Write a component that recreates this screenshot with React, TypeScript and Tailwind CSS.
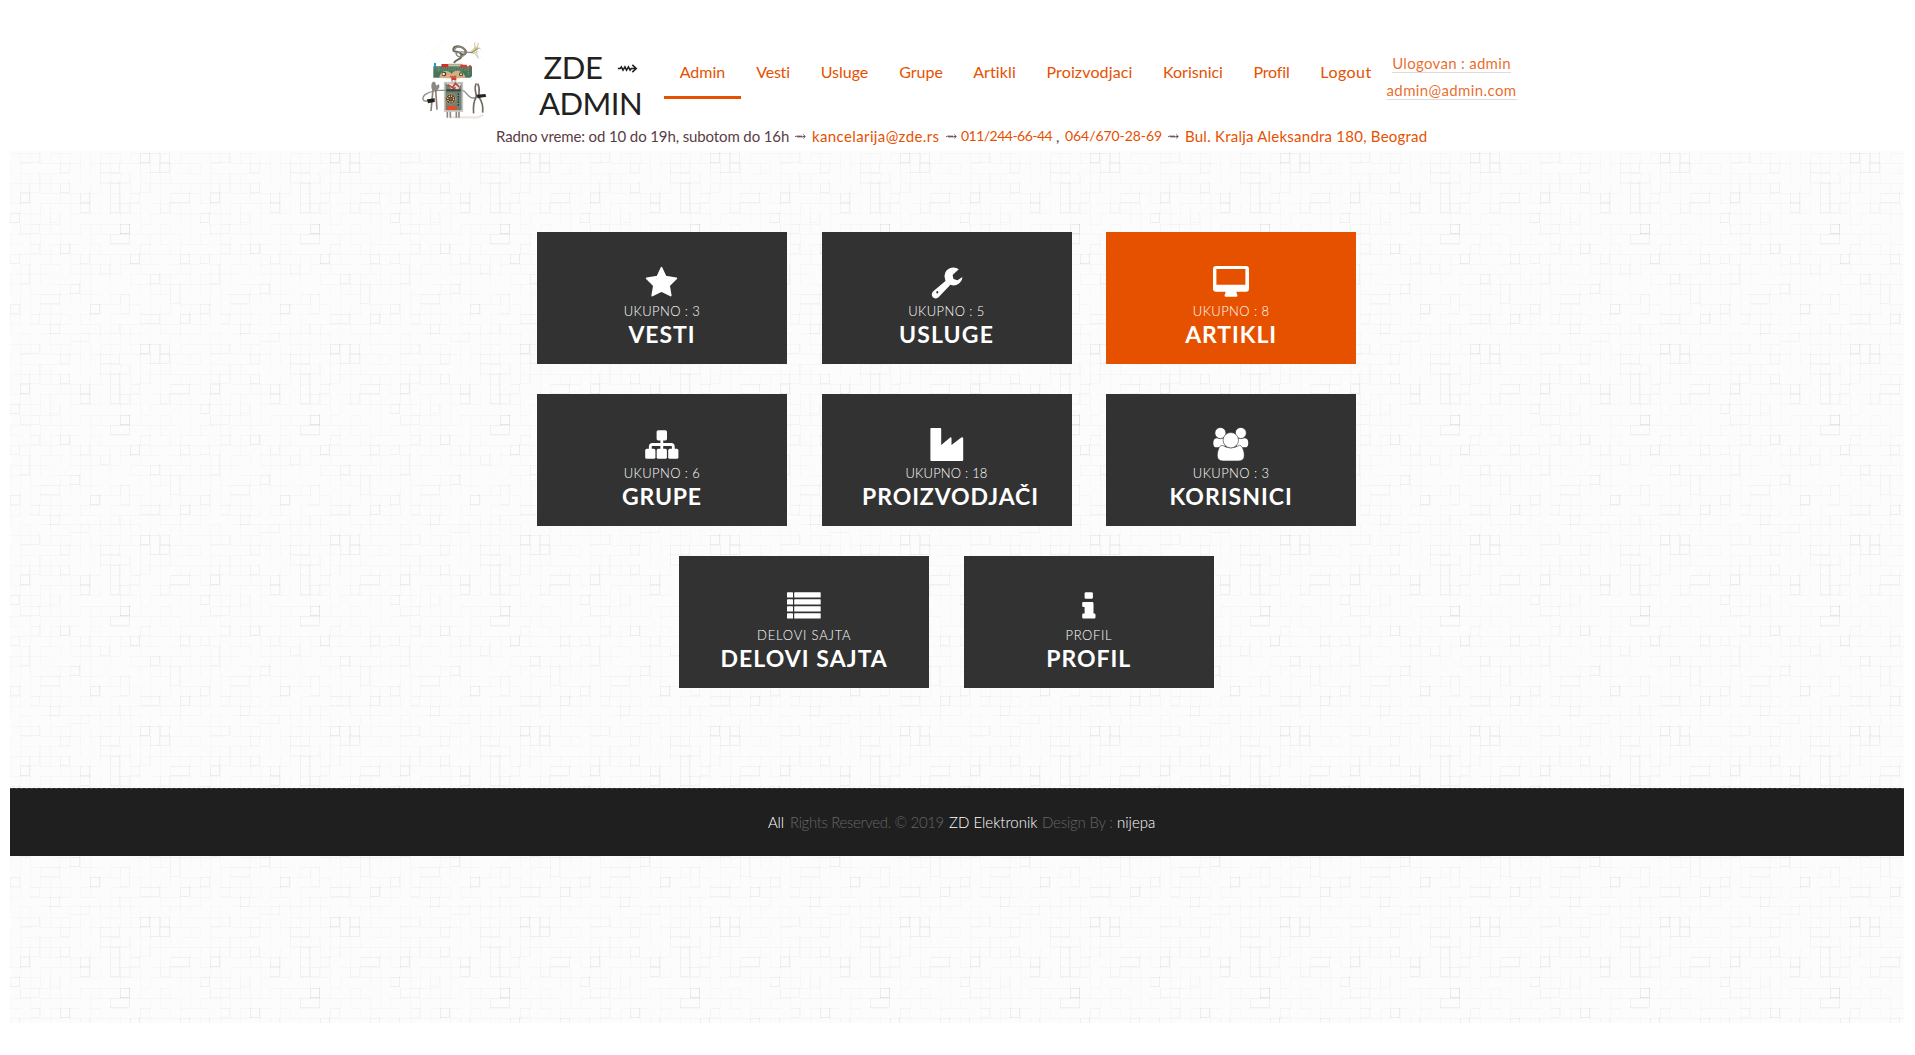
import React from "react";

const TILE_W = 190;
const TILE_H = 191;
const ROWS = [2, 12, 22, 32, 42, 52, 62, 73, 83, 93, 103, 113, 123, 133, 143, 153, 163, 173, 182];

/* Faint raised squares: [x, y, width, height, opacity] */
const SQUARES: number[][] = [
  [10, 2, 20, 10, 0.1], [130, 2, 10, 10, 0.2], [140, 2, 10, 20, 0.1], [150, 2, 10, 10, 0.13],
  [50, 12, 10, 10, 0.08], [90, 12, 20, 10, 0.1], [150, 12, 10, 10, 0.14], [130, 12, 20, 10, 0.05],
  [20, 22, 10, 20, 0.07], [90, 22, 30, 10, 0.06], [50, 32, 10, 10, 0.13], [10, 32, 10, 10, 0.1],
  [10, 42, 10, 10, 0.18], [100, 32, 10, 30, 0.13], [70, 42, 10, 10, 0.15], [70, 52, 10, 10, 0.14],
  [130, 32, 10, 10, 0.06], [120, 42, 10, 10, 0.08], [160, 42, 20, 10, 0.14], [150, 52, 10, 10, 0.08],
  [0, 62, 10, 10, 0.15], [110, 52, 10, 10, 0.08], [40, 62, 10, 10, 0.07], [110, 73, 10, 10, 0.25],
  [10, 73, 20, 10, 0.09], [100, 83, 20, 10, 0.14], [50, 93, 10, 10, 0.19], [20, 93, 10, 10, 0.08],
  [130, 93, 10, 10, 0.06], [120, 103, 10, 10, 0.2], [0, 103, 10, 10, 0.12], [170, 103, 10, 10, 0.13],
  [70, 103, 10, 10, 0.09], [10, 113, 10, 20, 0.11], [90, 113, 10, 10, 0.09], [60, 133, 10, 10, 0.15],
  [140, 123, 10, 10, 0.14], [30, 143, 20, 10, 0.1], [110, 143, 10, 20, 0.09], [160, 133, 10, 20, 0.09],
  [80, 153, 10, 10, 0.17], [0, 153, 10, 10, 0.1], [130, 163, 20, 10, 0.12], [40, 173, 10, 10, 0.1],
  [100, 173, 10, 10, 0.08], [170, 163, 10, 10, 0.16], [60, 182, 20, 9, 0.08], [20, 163, 10, 10, 0.08],
];

function fineEdges() {
  let seed = 37;
  const next = () => {
    seed = (seed * 16807) % 2147483647;
    return seed / 2147483647;
  };
  let path = "";
  for (const y of ROWS) {
    for (let x = 0; x < TILE_W; x += 10) {
      if (next() < 0.62) path += `M${x + 0.5} ${y + 0.5}h10`;
      if (next() < 0.62) path += `M${x + 0.5} ${y + 0.5}v10`;
    }
  }
  return path;
}

const EDGES = fineEdges();

function Texture() {
  return (
    <svg className="absolute inset-0 h-full w-full" aria-hidden="true">
      <defs>
        <pattern id="squares" width={TILE_W} height={TILE_H} patternUnits="userSpaceOnUse">
          <rect width={TILE_W} height={TILE_H} fill="#fcfcfc" />
          <path d={EDGES} stroke="#000" strokeOpacity="0.02" fill="none" />
          {SQUARES.map(([x, y, w, h, o], i) => (
            <g key={i} fill="none" stroke="#000">
              <path d={`M${x + 0.5} ${y + h - 0.5}V${y + 0.5}H${x + w}`} strokeOpacity={o * 0.18} />
              <path d={`M${x} ${y + h - 0.5}h${w - 0.5}v${-h}`} strokeOpacity={o * 0.34} />
            </g>
          ))}
        </pattern>
      </defs>
      <rect width="100%" height="100%" fill="url(#squares)" />
    </svg>
  );
}

function Robot() {
  return (
    <svg viewBox="0 0 240 300" className="h-[100px] w-[80px] shrink-0" fill="none" aria-hidden="true">
      <path d="M25 85 95 25M150 30l60 65M30 160l35 55M175 30l30 40" stroke="#f6f6f6" strokeWidth="2" />
      <path d="M105 262h85l15-8" stroke="#f0e4e0" strokeWidth="7" />
      <path d="M117 99c5-14 26-9 22-24-3-14-22-6-24-14-2-16 21-16 35-2 8 10-2 19-11 12" stroke="#69685b" strokeWidth="6" />
      <path d="M119 60c4-15 31-12 31 5s-22 20-27 6c9-12 32-2 47-3l18-12" stroke="#8b887b" strokeWidth="4" />
      <path d="m165 67 17-16m-12 14 24-11m-21 9 16 19m-9-20-1-24m5 20 7-19" stroke="#c6a54f" strokeWidth="2" />
      <path d="m171 72 20-8m-10-10 9 33m-8-37 15 7" stroke="#80b795" strokeWidth="1.5" />
      <path d="M101 101h39l9 6H94z" fill="#b9aa8e" />
      <path d="M55 109h116v29l-5 5H55z" fill="#48745d" />
      <path d="M58 114h110M63 120h98M71 109v16M160 112v23" stroke="#7f9c74" strokeWidth="3" strokeDasharray="4 3" />
      <rect x="79" y="102" width="21" height="9" rx="2" fill="#d82b2b" />
      <rect x="136" y="104" width="20" height="8" rx="2" fill="#df3931" />
      <path d="M60 99v12" stroke="#189cd8" strokeWidth="6" />
      <path d="M165 106v11" stroke="#d63a38" strokeWidth="6" />
      <path d="M73 143c4-26 30-23 37-11 7-14 34-14 42 11-27 3-53 3-79 0z" fill="#d9ad80" />
      <circle cx="87" cy="132" r="7" fill="#333d38" />
      <circle cx="86" cy="132" r="4" fill="#f5f1da" />
      <circle cx="138" cy="133" r="6" fill="#34473f" />
      <circle cx="138" cy="133" r="3" fill="#f1e8cf" />
      <path d="M105 139q9 4 19-1" stroke="#a84e32" strokeWidth="3" />
      <rect x="109" y="142" width="15" height="8" fill="#d43a2e" />
      <path d="M111 150v15m10-15v15" stroke="#b6b6ad" strokeWidth="6" />
      <rect x="89" y="158" width="53" height="85" fill="#6f8275" stroke="#c5c7c4" strokeWidth="5" />
      <path d="m94 160 45 1-11 20-19-4z" fill="#e6dfd4" />
      <path d="m98 164 15 9 8-13 12 11M110 181l12-9" stroke="#bd403a" strokeWidth="5" />
      <path d="M94 181h43" stroke="#374c3f" strokeWidth="7" />
      <circle cx="107" cy="207" r="15" fill="#4d3d2e" stroke="#b49464" strokeWidth="3" />
      <circle cx="107" cy="207" r="9" stroke="#e4cf9a" strokeWidth="4" strokeDasharray="4 3" />
      <circle cx="107" cy="207" r="4" fill="#8d5c38" />
      <path d="M130 190v40" stroke="#2f3c35" strokeWidth="4" strokeDasharray="5 3" />
      <rect x="95" y="228" width="31" height="12" fill="#e34d28" />
      <path d="M97 245v18m9-18v18m18-18v18m8-18v18" stroke="#8c897f" strokeWidth="5" />
      <path d="M91 181H71c-34 4-49 15-47 27 3 8 10 6 17 3" stroke="#8e8e86" strokeWidth="4" />
      <path d="M142 181c13 0 14 25 35 23l15-9" stroke="#8e8e86" strokeWidth="4" />
      <path d="M54 179 48 243M62 179l4 60" stroke="#8b8275" strokeWidth="5" />
      <path d="M51 178c-4-22 4-25 10-20-2 8 7 12 10 5 4 9-2 17-9 19z" fill="#8b8983" stroke="#625f58" />
      <path d="m36 208 23-3v11l-20 4z" fill="#222" />
      <path d="M184 160c-9 15 1 31 0 41-8 13-10 30-8 49M188 161c10 17 1 29 4 41 10 14 13 29 11 46" stroke="#716b62" strokeWidth="5" />
      <path d="m184 194 27-2 3 8-26 5z" fill="#252525" />
    </svg>
  );
}

function StarIcon() {
  return <path d="M17.5 1.8 21.6 10.7 32.3 12.4 25 19.5 26.7 29.5 17.5 24.9 8.3 29.5 10 19.5 2.7 12.4 13.4 10.7z" stroke="#fff" strokeWidth="1.8" strokeLinejoin="round" />;
}

function WrenchIcon() {
  return (
    <>
      <path d="M29.8 3.2A9 9 0 1 0 33.4 11l-4.9 3.2-4-1.1-.9-4.2z" />
      <path fillRule="evenodd" d="M17 14.6 21.2 19 10 30.8c-3.8 4.5-9.7-.9-6-5.3zM8.3 25a1 1.2 0 1 0 0 2.4 1 1.2 0 0 0 0-2.4z" />
    </>
  );
}

function MonitorIcon() {
  return <path fillRule="evenodd" d="M3 0h30a3 3 0 0 1 3 3v19.8a3 3 0 0 1-3 3h-9.6c0 2 1 2.5 1 3.6 0 .8-.5 1.3-1.2 1.3H12.8c-.7 0-1.2-.5-1.2-1.3 0-1.1 1-1.6 1-3.6H3a3 3 0 0 1-3-3V3a3 3 0 0 1 3-3zm.4 3v15.8h29V3z" />;
}

function SitemapIcon() {
  return (
    <>
      <rect x="12.6" y="2.2" width="10.4" height="10.2" rx="1.6" />
      <path d="M17.8 12v10M6.3 22v-3.4q0-2.1 2.1-2.1h18.8q2.1 0 2.1 2.1V22" fill="none" stroke="#fff" strokeWidth="2.8" />
      <rect x="1.2" y="20.8" width="10.2" height="10" rx="1.6" />
      <rect x="12.7" y="20.8" width="10.2" height="10" rx="1.6" />
      <rect x="24.2" y="20.8" width="10.2" height="10" rx="1.6" />
    </>
  );
}

function FactoryIcon() {
  return <path d="M2.2 0h9.2q.8 0 .8.8V17l9-7.4q1.3-.8 1.3.6V17l9.8-7.5q1.9-1 1.9.9V32q0 1-1 1H2.4q-1 0-1-1V.8q0-.8.8-.8z" />;
}

function PeopleIcon() {
  return (
    <>
      <path d="M3.4 10.2h8.4v9H2.2C-.4 18.6-.6 10.3 3.4 10.2zM32.2 10.2h-8.4v9h9.6c2.6-.6 2.8-8.9-1.2-9z" />
      <circle cx="7.4" cy="5" r="5.6" stroke="#323232" strokeWidth=".8" />
      <circle cx="27.8" cy="5" r="5.6" stroke="#323232" strokeWidth=".8" />
      <path d="M9 17.2q8.7 5.4 17.6 0c4.2.8 5.6 10.8 4 13.4-1.3 2.2-3.2 2.4-5.4 2.4H10.4c-2.2 0-4.1-.2-5.4-2.4-1.6-2.6-.2-12.6 4-13.4z" stroke="#323232" strokeWidth=".6" />
      <circle cx="17.8" cy="12.2" r="7.7" stroke="#323232" strokeWidth=".6" />
    </>
  );
}

function ListIcon() {
  return (
    <>
      {[2.2, 9.2, 16.2, 23.2].map((y) => (
        <g key={y}>
          <rect x="1" y={y} width="6" height="5.3" rx=".6" />
          <rect x="8.2" y={y} width="26.5" height="5.3" rx=".6" />
        </g>
      ))}
    </>
  );
}

function InfoIcon() {
  return (
    <>
      <rect x="13.6" y="2.2" width="8.3" height="6.6" rx="1.4" />
      <path d="M12.2 12h8.9q1.4 0 1.4 1.4v10.2h.8q1.2 0 1.2 1.2v2.4q0 1.2-1.2 1.2H12.2q-1 0-1-1.2v-2.4q0-1.2 1-1.2h1.4v-6.6h-1.4q-1 0-1-1.2v-2.6q0-1.2 1-1.2z" />
    </>
  );
}

interface Tile {
  title: string;
  label: string;
  icon: React.ReactNode;
  active?: boolean;
  labelClass?: string;
  titleClass?: string;
}

const TILE_ROWS: Tile[][] = [
  [
    { title: "VESTI", label: "UKUPNO : 3", icon: <StarIcon />, titleClass: "tracking-[0.9px]" },
    { title: "USLUGE", label: "UKUPNO : 5", icon: <WrenchIcon />, titleClass: "tracking-[1.15px]" },
    { title: "ARTIKLI", label: "UKUPNO : 8", icon: <MonitorIcon />, active: true, titleClass: "tracking-[0.9px]" },
  ],
  [
    { title: "GRUPE", label: "UKUPNO : 6", icon: <SitemapIcon />, titleClass: "tracking-[0.8px]" },
    { title: "PROIZVODJAČI", label: "UKUPNO : 18", icon: <FactoryIcon />, labelClass: "tracking-[0.2px]", titleClass: "pl-[8px] tracking-[0.9px]" },
    { title: "KORISNICI", label: "UKUPNO : 3", icon: <PeopleIcon />, titleClass: "tracking-[1px]" },
  ],
  [
    { title: "DELOVI SAJTA", label: "DELOVI SAJTA", icon: <ListIcon />, labelClass: "tracking-[0.8px]", titleClass: "tracking-[1.05px]" },
    { title: "PROFIL", label: "PROFIL", icon: <InfoIcon />, labelClass: "tracking-[0.6px]", titleClass: "tracking-[0.95px]" },
  ],
];

function Card({ title, label, icon, active, labelClass = "tracking-[0.4px]", titleClass }: Tile) {
  return (
    <a className={`flex h-[132px] w-[250px] flex-col items-center pt-[34px] text-white ${active ? "bg-[#e65100]" : "bg-[#323232]"}`}>
      <svg viewBox="0 0 36 36" className="h-9 w-9 shrink-0 overflow-visible" fill="#fff" aria-hidden="true">{icon}</svg>
      <span className={`mt-px text-[13px] leading-4 font-light text-white ${labelClass}`}>{label}</span>
      <span className={`mt-px text-[23px] leading-7 font-bold ${titleClass}`}>{title}</span>
    </a>
  );
}

const NAV: [string, string][] = [
  ["Admin", "w-[77px] border-[#e65100]"],
  ["Vesti", "w-[64px] border-transparent tracking-[-0.2px]"],
  ["Usluge", "w-[79px] border-transparent"],
  ["Grupe", "w-[74px] border-transparent"],
  ["Artikli", "w-[73px] border-transparent tracking-[0.1px]"],
  ["Proizvodjaci", "w-[117px] border-transparent tracking-[0.14px]"],
  ["Korisnici", "w-[90px] border-transparent"],
  ["Profil", "w-[67px] border-transparent tracking-[-0.15px]"],
  ["Logout", "w-[82px] border-transparent tracking-[0.45px]"],
];

function Arrow({ className }: { className: string }) {
  return (
    <svg viewBox="0 0 62 28" className={`shrink-0 ${className}`} fill="none" stroke="currentColor" strokeWidth="5" aria-hidden="true">
      <path d="M1 14h7l4-5 5 10 6-10 5 10 6-10 5 10 4-5h14M46 3l12 11-12 11" />
    </svg>
  );
}

function Header() {
  return (
    <header className="h-[151px] bg-white pt-[30px]">
      <div className="flex h-[96px] items-start pl-[405px]">
        <Robot />
        <h1 className="mt-[19px] ml-[34px] flex w-[123px] flex-col items-center text-[31px] leading-9 text-[#212121]">
          <span className="flex items-center">
            <span className="tracking-[-0.3px]">ZDE</span>
            <Arrow className="mt-[3px] ml-[14px] h-[9px] w-[21px]" />
          </span>
          <span className="tracking-[-0.5px]">ADMIN</span>
        </h1>
        <nav className="mt-[30px] ml-[12px] flex">
          {NAV.map(([name, cls]) => (
            <a key={name} className={`h-[39px] border-b-[3px] text-center text-[16px] leading-6 text-[#e65100] ${cls}`}>{name}</a>
          ))}
        </nav>
        <div className="mt-[23px] flex w-[129px] flex-col items-center gap-[6px] text-[15px] leading-5 whitespace-nowrap text-[#e65100]/85">
          <span className="h-5 border-b border-[#dcdcdc] tracking-[0.3px]">Ulogovan : admin</span>
          <span className="mt-px h-5 border-b border-[#dcdcdc] tracking-[0.38px]">admin@admin.com</span>
        </div>
      </div>
      <p className="flex items-center pl-[486px] text-[15px] leading-5 whitespace-nowrap text-[#5a3d46]">
        <span className="w-[299px] tracking-[-0.12px]">Radno vreme: od 10 do 19h, subotom do 16h</span>
        <Arrow className="mt-px mr-[6px] h-[5px] w-[11px]" />
        <a className="w-[134px] tracking-[0.38px] text-[#e65100]">kancelarija@zde.rs</a>
        <Arrow className="mt-px mr-1 h-[5px] w-[11px]" />
        <a className="w-[95px] text-[14px] tracking-[-0.52px] text-[#e65100]">011/244-66-44</a>
        <span className="w-[9px]">,</span>
        <a className="w-[103px] text-[14px] tracking-[-0.07px] text-[#e65100]">064/670-28-69</a>
        <Arrow className="mt-px mr-[6px] h-[5px] w-[11px]" />
        <a className="tracking-[0.23px] text-[#e65100]">Bul. Kralja Aleksandra 180, Beograd</a>
      </p>
    </header>
  );
}

export default function App() {
  return (
    <div className="h-[1055px] bg-white px-[10px] font-['Lato',sans-serif]">
      <div className="w-[1894px]">
        <Header />
        <div className="relative h-[872px]">
          <Texture />
          <main className="relative flex h-[637px] flex-col gap-[30px] pt-[81px] pr-[21px]">
            {TILE_ROWS.map((row, i) => (
              <div key={i} className="flex justify-center gap-[34.6px]">
                {row.map((tile) => <Card key={tile.title} {...tile} />)}
              </div>
            ))}
          </main>
          <footer className="relative flex h-[68px] justify-center border-t border-dashed border-[#444] bg-[#1f1f1f] pt-[21px] pl-[9px] text-[15px] leading-6 font-light whitespace-nowrap text-[#666]">
            <span className="w-[22px] tracking-[-0.2px] text-white">All</span>
            <span className="w-[159px] tracking-[-0.36px]">Rights Reserved. © 2019</span>
            <span className="w-[93px] text-white">ZD Elektronik</span>
            <span className="w-[75px] tracking-[-0.2px]">Design By :</span>
            <span className="w-[38px] text-white">nijepa</span>
          </footer>
        </div>
      </div>
    </div>
  );
}
